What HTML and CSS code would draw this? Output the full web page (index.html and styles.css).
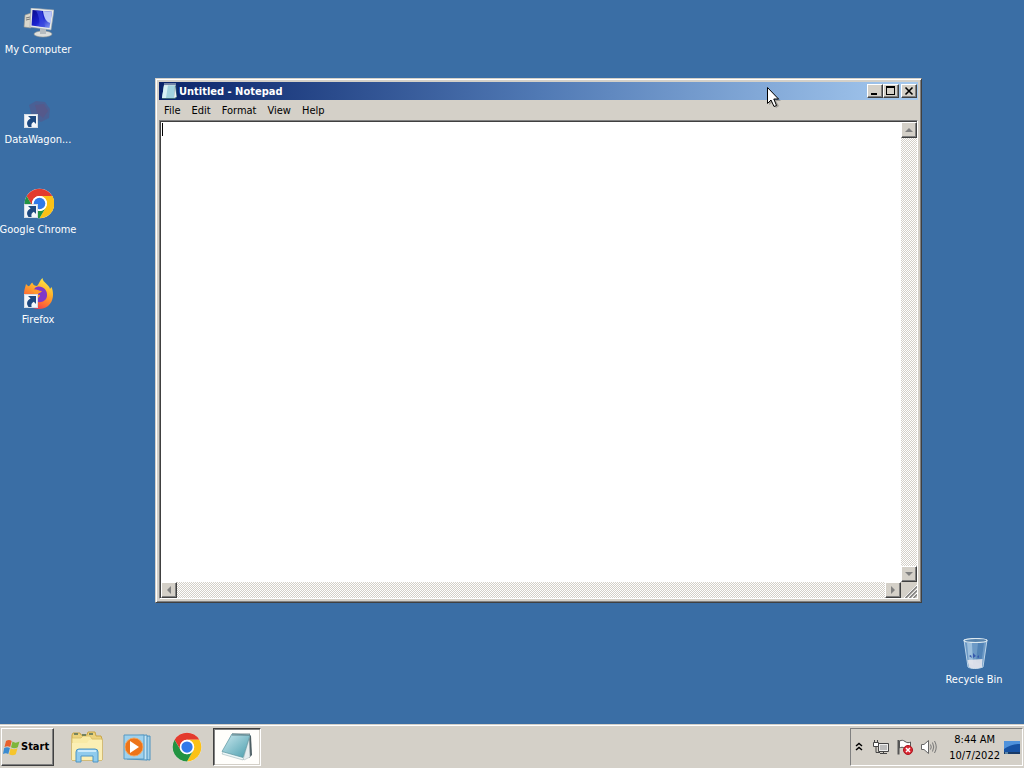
FILE: index.html
```html
<!DOCTYPE html>
<html lang="en">

<head>
    <meta charset="UTF-8">
    <meta name="viewport" content="width=device-width, initial-scale=1.0">
    <title>Desktop</title>
    <link rel="stylesheet" href="styles.css">
</head>

<body>
    <!-- shared drawings -->
    <svg class="defs" width="0" height="0">
        <symbol id="shortcut" viewBox="0 0 14 14">
            <rect x="0.5" y="0.5" width="13" height="13" fill="#f4f7fa" stroke="#d5dce4"/>
            <path d="M4 2H12V10L9.8 7.8C7.6 9 7 10.5 7.6 13H4.5C1.8 9.5 3.2 6.5 6.6 4.6z" fill="#1f4a80"/>
        </symbol>
        <symbol id="chrome" viewBox="0 0 48 48">
            <circle cx="24" cy="24" r="23" fill="#fff"/>
            <path d="M4.1 12.5A23 23 0 0 1 43.9 12.5H24A11.5 11.5 0 0 0 14 29.7z" fill="#e33b2e"/>
            <path d="M43.9 12.5A23 23 0 0 1 24 47L34 29.7A11.5 11.5 0 0 0 24 12.5z" fill="#fbc116"/>
            <path d="M24 47A23 23 0 0 1 4.1 12.5L14 29.7A11.5 11.5 0 0 0 34 29.7z" fill="#229342"/>
            <circle cx="24" cy="24" r="11.5" fill="#fff"/>
            <circle cx="24" cy="24" r="9" fill="#3079ea"/>
        </symbol>
    </svg>

    <main class="desktop">
        <div class="icons">
            <button class="icon">
                <svg width="32" height="32" viewBox="0 0 32 32">
                    <defs>
                        <linearGradient id="screen" x1="0" y1="0" x2="1" y2="1">
                            <stop offset="0" stop-color="#0b0b8a"/>
                            <stop offset="0.5" stop-color="#1a22d0"/>
                            <stop offset="1" stop-color="#8fa8f5"/>
                        </linearGradient>
                    </defs>
                    <path d="M3 7L9 5V20L2 19z" fill="#d9d7cc" stroke="#93938c" stroke-width="0.6"/>
                    <path d="M4 10L8 9M4 12L8 11" stroke="#777"/>
                    <ellipse cx="21" cy="26" rx="9" ry="3" fill="#dedfdc" stroke="#9c9c94" stroke-width="0.6"/>
                    <path d="M18 20H24V26H18z" fill="#b6bcc0"/>
                    <path d="M9 0L32 2L29 22L8 19z" fill="#e9ebe8" stroke="#9ba3aa" stroke-width="0.6"/>
                    <path d="M10.5 2L30 3.8L27.5 20L9.5 17.5z" fill="url(#screen)"/>
                    <path d="M21 3L30 3.8L28.5 15C24 14 22 10 21 3z" fill="#c9d6fb" opacity="0.9"/>
                    <path d="M14 2.5L20 3L23 19L17 18.2C18 13 17 8 14 2.5z" fill="#3946df" opacity="0.7"/>
                </svg>
                <span class="icon-label">My Computer</span>
            </button>
            <button class="icon">
                <svg width="32" height="32" viewBox="0 0 32 32">
                    <path d="M7 7L14 3L23 4L28 11L27 20L19 24L10 19z" fill="#70426f" opacity="0.3"/>
                    <path d="M13 7L22 6L26 13L21 20L15 15z" fill="#8a3e61" opacity="0.18"/>
                    <use href="#shortcut" x="2" y="16" width="14" height="14"/>
                </svg>
                <span class="icon-label">DataWagon...</span>
            </button>
            <button class="icon">
                <svg width="32" height="32" viewBox="0 0 32 32">
                    <use href="#chrome" x="2" y="0" width="31" height="31"/>
                    <use href="#shortcut" x="2" y="16" width="14" height="14"/>
                </svg>
                <span class="icon-label">Google Chrome</span>
            </button>
            <button class="icon">
                <svg width="32" height="32" viewBox="0 0 32 32">
                    <defs>
                        <linearGradient id="fox" x1="0.8" y1="0" x2="0.3" y2="1">
                            <stop offset="0" stop-color="#fff04a"/>
                            <stop offset="0.4" stop-color="#ffb02a"/>
                            <stop offset="0.75" stop-color="#ff6636"/>
                            <stop offset="1" stop-color="#e8305c"/>
                        </linearGradient>
                    </defs>
                    <path d="M4 6C5 7 6 8 7 8.3C9 6 10 4 10.5 5C11 7 13 8 15 8C17 6 18 2 20.5 0C21 5 27 6 28 11L29.5 9C33 17 31 30 17.5 31C8 31 2 25 2 17C2 12 3 10 4 6z" fill="url(#fox)"/>
                    <path d="M13 10C17 6 26 10 25 18C24 25 15 26 11 21C15 22 18 19 18 17C15 17 13 16 11 14C11 13 12 11 13 10z" fill="#8037c9"/>
                    <path d="M10 12C13 10 16 13 20 13C19 15 16 15 15 17C13 17 11 15 10 12z" fill="#ff9a2c"/>
                    <use href="#shortcut" x="2" y="16" width="14" height="14"/>
                </svg>
                <span class="icon-label">Firefox</span>
            </button>
        </div>

        <button class="icon recycle-bin">
            <svg width="32" height="32" viewBox="0 0 32 32">
                <path d="M6 2L29 2L25 29C20 31 13 31 10 29z" fill="#7fa9d2" fill-opacity="0.75" stroke="#b9d3e8" stroke-width="1"/>
                <path d="M9 5H14L15 27L11 26z" fill="#b6d3ea" opacity="0.65"/>
                <path d="M20 5H26L23 26L18 24z" fill="#4a7db2" opacity="0.8"/>
                <path d="M9.5 22L24.5 21L24 29C19 31 14 31 11 29z" fill="#e5e6ec" opacity="0.9"/>
                <path d="M15 15L18 18L15 20zM11 18L13 17L14 20zM19 19L21 17V20z" fill="#3759ad"/>
                <ellipse cx="17.5" cy="2.5" rx="11.5" ry="2" fill="#5783ac" stroke="#dce8ef" stroke-width="1.2"/>
            </svg>
            <span class="icon-label">Recycle Bin</span>
        </button>

        <section class="window">
            <header class="title-bar">
                <svg width="16" height="16" viewBox="0 0 16 16">
                    <path d="M3 2L15 2L16 14L14 16H1z" fill="#3d6877"/>
                    <path d="M3 2H14L13 15H1z" fill="#a3d3df"/>
                    <path d="M3 2H7L5 15H1z" fill="#d8f1f5"/>
                    <path d="M14 2L15.5 14L13 15z" fill="#eef4f3"/>
                    <path d="M4 0V3M6 0V3M8 0V3M10 0V3M12 0V3M14 0V3" stroke="#d5e1e4" stroke-width="1"/>
                </svg>
                <h1 class="title">Untitled - Notepad</h1>
                <div class="title-buttons">
                    <button class="title-btn" aria-label="Minimize">
                        <svg width="12" height="10" viewBox="0 0 12 10"><path d="M2 7H8V9H2z"/></svg>
                    </button>
                    <button class="title-btn" aria-label="Maximize">
                        <svg width="12" height="10" viewBox="0 0 12 10"><path d="M1 0H10V9H1zM2 2V8H9V2z" fill-rule="evenodd"/></svg>
                    </button>
                    <button class="title-btn close-btn" aria-label="Close">
                        <svg width="12" height="10" viewBox="0 0 12 10"><path d="M2.5 1.5L9.5 8.5M9.5 1.5L2.5 8.5" stroke="#000" stroke-width="1.6"/></svg>
                    </button>
                </div>
            </header>
            <nav class="menu-bar">
                <button class="menu-item">File</button>
                <button class="menu-item">Edit</button>
                <button class="menu-item">Format</button>
                <button class="menu-item">View</button>
                <button class="menu-item">Help</button>
            </nav>
            <div class="editor">
                <textarea class="text" aria-label="Text" spellcheck="false"></textarea>
                <span class="caret"></span>
                <div class="scrollbar vertical">
                    <button class="scroll-btn" aria-label="Scroll up">
                        <svg width="12" height="12" viewBox="0 0 12 12"><path d="M2 8H10L6 4z"/></svg>
                    </button>
                    <button class="scroll-btn" aria-label="Scroll down">
                        <svg width="12" height="12" viewBox="0 0 12 12"><path d="M2 4H10L6 8z"/></svg>
                    </button>
                </div>
                <div class="scrollbar horizontal">
                    <button class="scroll-btn" aria-label="Scroll left">
                        <svg width="12" height="12" viewBox="0 0 12 12"><path d="M8 2V10L4 6z"/></svg>
                    </button>
                    <button class="scroll-btn" aria-label="Scroll right">
                        <svg width="12" height="12" viewBox="0 0 12 12"><path d="M4 2V10L8 6z"/></svg>
                    </button>
                </div>
                <svg class="grip" width="16" height="16" viewBox="0 0 16 16">
                    <path d="M3 16L16 3M7 16L16 7M11 16L16 11" stroke="#fff"/>
                    <path d="M4.5 16L16 4.5M8.5 16L16 8.5M12.5 16L16 12.5" stroke="#808080" stroke-width="1.5"/>
                </svg>
            </div>
        </section>

        <svg class="pointer" width="16" height="24" viewBox="0 0 16 24">
            <path d="M3 3V19L7 16L10 22L13 20L10 15H15z" fill="#000" opacity="0.25"/>
            <path d="M1.5 1.5V17.5L5 14L8 20.5L10.5 19.5L7.8 13H12.5z" fill="#fff" stroke="#000" stroke-width="1"/>
        </svg>
    </main>

    <footer class="taskbar">
        <button class="start-btn">
            <svg width="17" height="17" viewBox="0 0 17 17">
                <path d="M3 2C5 0.5 7 0.5 8.7 2L7.2 8C5.5 7 3.5 7 1.5 8z" fill="#e8602c"/>
                <path d="M9.5 2.5C11.5 4 13.5 4 16.5 2.5L14.8 8.3C12.5 9.5 10 9.5 8 8.3z" fill="#7fb63b"/>
                <path d="M1.2 9C3 8 5 8 6.9 9L5.3 15C3.5 14 2 14 0 15z" fill="#3a8bd0"/>
                <path d="M7.7 9.3C9.5 10.5 11.5 10.5 14.5 9.3L12.8 15.3C10.5 16.6 8.5 16.6 6.1 15.3z" fill="#f6c52c"/>
            </svg>
            <span>Start</span>
        </button>
        <div class="tasks">
            <button class="task" aria-label="Windows Explorer">
                <svg width="34" height="32" viewBox="0 0 34 32">
                    <path d="M2 4L3 2H10L11 4H17L18 1H25L26 5H31L32 8V29H2z" fill="#ecd27c" stroke="#c9a545"/>
                    <path d="M2 7H11L13 5H20L22 8H32V29H2z" fill="#f8eaa6" stroke="#d7bc64" stroke-width="0.8"/>
                    <path d="M4 3H8M12 4H16M19 3H23" stroke="#536f58" stroke-width="1.5"/>
                    <path d="M2 12H17L19 9H32V29H2z" fill="#fbefb4"/>
                    <path d="M6 31V21Q6 18 9 18H25Q28 18 28 21V31H23V25H11V31z" fill="#8fcbed" stroke="#4d94c4"/>
                    <path d="M8 20H26" stroke="#dff4ff" stroke-width="1.5"/>
                </svg>
            </button>
            <button class="task" aria-label="Windows Media Player">
                <svg width="30" height="28" viewBox="0 0 30 28">
                    <path d="M8 4L28 3V27L8 25z" fill="#a6d2ea" stroke="#4b91bf"/>
                    <path d="M5 3L25 2V27L5 26z" fill="#c6e5f4" stroke="#4b91bf"/>
                    <path d="M2 2H22V26H2z" fill="#9ed1ed" stroke="#5799c3"/>
                    <circle cx="12" cy="14" r="9" fill="#ed7419" stroke="#f5a35a"/>
                    <path d="M8 8L17 14L8 20z" fill="#fff"/>
                </svg>
            </button>
            <button class="task" aria-label="Google Chrome">
                <svg width="30" height="30"><use href="#chrome"/></svg>
            </button>
            <button class="task active" aria-label="Untitled - Notepad">
                <svg width="32" height="30" viewBox="0 0 32 30">
                    <defs>
                        <linearGradient id="pad" x1="0" y1="0" x2="1" y2="1">
                            <stop offset="0" stop-color="#cdeaf0"/>
                            <stop offset="1" stop-color="#489cac"/>
                        </linearGradient>
                    </defs>
                    <path d="M28 2L30 4L31 23L28 26z" fill="#4b5c61"/>
                    <path d="M28 4L29 25L23 28L21 26z" fill="#e6edef" stroke="#a5b2b8" stroke-width="0.5"/>
                    <path d="M11 2L29 3L22 28L1 22z" fill="#ecf7f8" stroke="#8ea9af" stroke-width="0.5"/>
                    <path d="M11 2L29 3L22 25.5L1 19.5z" fill="url(#pad)" stroke="#5f97a0" stroke-width="0.7"/>
                    <path d="M12 1V4M14 1V4M16 1V4M18 1V4M20 1V4M22 1V4M24 1V4M26 1V4M28 1V4" stroke="#536d74" stroke-width="0.8"/>
                </svg>
            </button>
        </div>
        <div class="tray">
            <button class="tray-btn chevrons" aria-label="Show hidden icons">
                <svg width="8" height="10" viewBox="0 0 8 10"><path d="M1 4L4 1.5L7 4M1 8L4 5.5L7 8" fill="none" stroke="#000" stroke-width="1.5"/></svg>
            </button>
            <button class="tray-btn" aria-label="Network">
                <svg width="16" height="16" viewBox="0 0 16 16">
                    <path d="M5.5 4.5H15.5V12.5H5.5z" fill="#eee" stroke="#454545"/>
                    <path d="M7 6H14V11H7z" fill="#bcbcbc"/>
                    <path d="M7 14.5H14M10.5 12V14" stroke="#454545"/>
                    <path d="M0.5 3.5H5.5V7.5H0.5z" fill="#fff" stroke="#454545"/>
                    <path d="M1.5 1V3M4.5 1V3M3 8V13.5H7" fill="none" stroke="#454545"/>
                </svg>
            </button>
            <button class="tray-btn" aria-label="Action Center">
                <svg width="16" height="16" viewBox="0 0 16 16">
                    <path d="M1.5 1V15.5" stroke="#555" stroke-width="2"/>
                    <path d="M2.5 2C5 1 6 1 8 2.5C10 4 12 4 13.5 3V9.5C11 11 9 10 7.5 9C6 8 4 8 2.5 9z" fill="#fff" stroke="#555"/>
                    <circle cx="11" cy="11" r="4.5" fill="#da2832" stroke="#a9161e"/>
                    <path d="M9 9L13 13M13 9L9 13" stroke="#fff" stroke-width="1.5"/>
                </svg>
            </button>
            <button class="tray-btn" aria-label="Volume">
                <svg width="16" height="16" viewBox="0 0 16 16">
                    <path d="M0.5 5.5H3L7.5 1.5V14.5L3 10.5H0.5z" fill="#fff" stroke="#666"/>
                    <path d="M9.5 5.5Q11 8 9.5 10.5M11.5 3.5Q14 8 11.5 12.5M13.5 2Q17 8 13.5 14" fill="none" stroke="#777"/>
                </svg>
            </button>
            <div class="clock">
                <div>8:44 AM</div>
                <div>10/7/2022</div>
            </div>
            <button class="tray-btn" aria-label="Show desktop">
                <svg width="16" height="16" viewBox="0 0 16 16">
                    <path d="M0 2H16V13H0z" fill="#1752a3"/>
                    <path d="M0 2H16V5C10 5 5 7 0 10z" fill="#4f92dc"/>
                    <path d="M0 13H16V15H0z" fill="#183a67"/>
                    <path d="M1 14H4" stroke="#9fd0ea"/>
                </svg>
            </button>
        </div>
    </footer>
</body>

</html>
```
FILE: styles.css
```css
* {
    box-sizing: border-box;
}

body {
    margin: 0;
    height: 100vh;
    display: flex;
    flex-direction: column;
    overflow: hidden;
    background-color: #3a6ea5;
    font-family: "DejaVu Sans Condensed", "DejaVu Sans", sans-serif;
    font-size: 11px;
    line-height: 16px;
    color: #000;
}

button {
    margin: 0;
    padding: 0;
    border: none;
    background: none;
    font: inherit;
    color: inherit;
}

svg {
    display: block;
    flex: none;
}

.defs {
    position: absolute;
}

/* desktop */
.desktop {
    position: relative;
    flex: 1;
    min-height: 0;
}

.icons {
    display: flex;
    flex-direction: column;
    gap: 40px;
    width: 76px;
    padding-top: 8px;
}

.icon {
    display: flex;
    flex-direction: column;
    align-items: center;
    gap: 2px;
    width: 76px;
    height: 50px;
    color: #fff;
}

.icon-label {
    white-space: nowrap;
}

.recycle-bin {
    position: absolute;
    right: 12px;
    bottom: 36px;
}

.pointer {
    position: absolute;
    left: 766px;
    top: 86px;
}

/* window */
.window {
    position: absolute;
    left: 155px;
    top: 78px;
    right: 102px;
    bottom: 121px;
    display: flex;
    flex-direction: column;
    padding: 3px;
    border: 1px solid;
    border-color: #d4d0c8 #404040 #404040 #d4d0c8;
    box-shadow: inset 1px 1px #fff, inset -1px -1px #808080;
    background-color: #d4d0c8;
}

.title-bar {
    display: flex;
    align-items: center;
    gap: 2px;
    height: 18px;
    padding: 0 1px 0 2px;
    background: linear-gradient(to right, #0a246a, #5079b4 50%, #a6caf0);
    color: #fff;
}

.title {
    flex: 1;
    margin: 0;
    padding-top: 2px;
    font-size: 11px;
    font-weight: bold;
}

.title-buttons {
    display: flex;
}

.title-btn,
.scroll-btn {
    display: flex;
    align-items: center;
    justify-content: center;
    border: 1px solid;
    border-color: #fff #404040 #404040 #fff;
    box-shadow: inset -1px -1px #808080;
    background-color: #d4d0c8;
}

.title-btn {
    width: 16px;
    height: 14px;
}

.close-btn {
    margin-left: 2px;
}

.menu-bar {
    display: flex;
    gap: 1px;
    height: 20px;
}

.menu-item {
    padding: 2px 5px 0;
}

.editor {
    position: relative;
    flex: 1;
    min-height: 0;
    display: grid;
    grid-template-columns: 1fr 16px;
    grid-template-rows: 1fr 16px;
    border: 1px solid;
    border-color: #808080 #fff #fff #808080;
    box-shadow: inset 1px 1px #404040;
    padding: 1px 0 0 1px;
}

.text {
    width: 100%;
    height: 100%;
    padding: 1px;
    border: none;
    outline: none;
    resize: none;
    background-color: #fff;
    font-family: "Liberation Mono", monospace;
    font-size: 13px;
}

.caret {
    position: absolute;
    left: 2px;
    top: 2px;
    width: 1px;
    height: 13px;
    background-color: #000;
}

.scrollbar {
    display: flex;
    justify-content: space-between;
    background: repeating-conic-gradient(#fff 0 25%, #d4d0c8 0 50%) 0 0 / 2px 2px;
}

.vertical {
    flex-direction: column;
}

.scroll-btn {
    width: 16px;
    height: 16px;
    fill: #808080;
}

/* taskbar */
.taskbar {
    display: flex;
    height: 44px;
    padding: 2px 1px;
    border-top: 1px solid #d4d0c8;
    box-shadow: inset 0 1px #fff;
    background-color: #d4d0c8;
}

.start-btn {
    display: flex;
    align-items: center;
    gap: 1px;
    width: 53px;
    margin-top: 1px;
    padding-left: 1px;
    border: 1px solid;
    border-color: #fff #404040 #404040 #fff;
    box-shadow: inset -1px -1px #808080;
    font-weight: bold;
}

.tasks {
    display: flex;
    flex: 1;
    gap: 2px;
    margin: 1px 0 0 9px;
}

.task {
    display: flex;
    align-items: center;
    justify-content: center;
    width: 48px;
}

.active {
    border: 1px solid;
    border-color: #404040 #fff #fff #404040;
    box-shadow: inset 1px 1px #808080, inset -1px -1px #d4d0c8;
    background-color: #fffefb;
}

.tray {
    display: flex;
    align-items: center;
    gap: 8px;
    margin-top: 1px;
    padding: 0 2px 0 4px;
    border: 1px solid;
    border-color: #808080 #fff #fff #808080;
}

.chevrons {
    margin-right: 2px;
}

.clock {
    margin-right: -4px;
    padding: 2px 0 0 4px;
    text-align: center;
}
```
